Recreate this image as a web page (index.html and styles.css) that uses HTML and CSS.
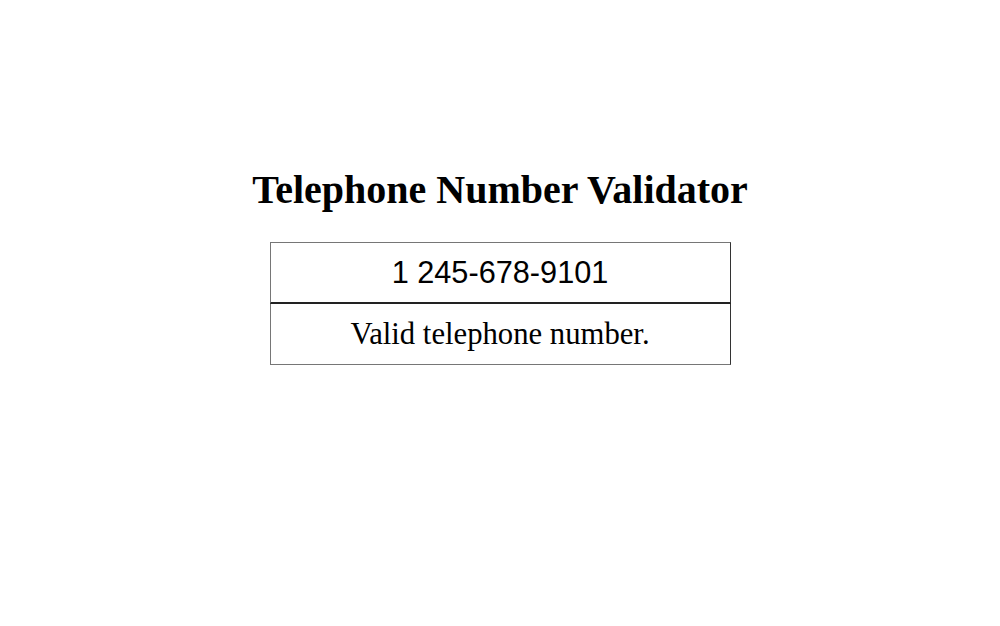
FILE: index.html
```html
<!DOCTYPE html>
<html>
<head>
<meta charset="utf-8">
<link rel="stylesheet" href="styles.css">
</head>
<body>
<main class="page">
  <h1 class="title">Telephone Number Validator</h1>
  <div class="validator">
    <input class="phone-input" type="text" value="1 245-678-9101">
    <div class="result">Valid telephone number.</div>
  </div>
</main>
</body>
</html>
```
FILE: styles.css
```css
html, body {
  margin: 0;
  padding: 0;
  background: #ffffff;
}
.page {
  display: flex;
  flex-direction: column;
  align-items: center;
  padding-top: 164px;
  font-family: "Liberation Serif", "Times New Roman", serif;
  color: #000;
}
.title {
  margin: 0 0 26px 0;
  font-size: 40px;
  font-weight: bold;
  line-height: 52px;
}
.validator {
  width: 461px;
  display: flex;
  flex-direction: column;
}
.phone-input {
  box-sizing: border-box;
  width: 100%;
  height: 62px;
  margin: 0;
  border: 1px solid #767676;
  border-bottom: 2px solid #222;
  border-right-color: #333;
  text-align: center;
  font-family: "Liberation Sans", Arial, sans-serif;
  font-size: 30.7px;
  color: #000;
  outline: none;
  padding: 0;
}
.result {
  box-sizing: border-box;
  height: 61px;
  border: 1px solid #767676;
  border-top: none;
  border-right-color: #333;
  display: flex;
  align-items: center;
  justify-content: center;
  font-size: 30.7px;
}
```
